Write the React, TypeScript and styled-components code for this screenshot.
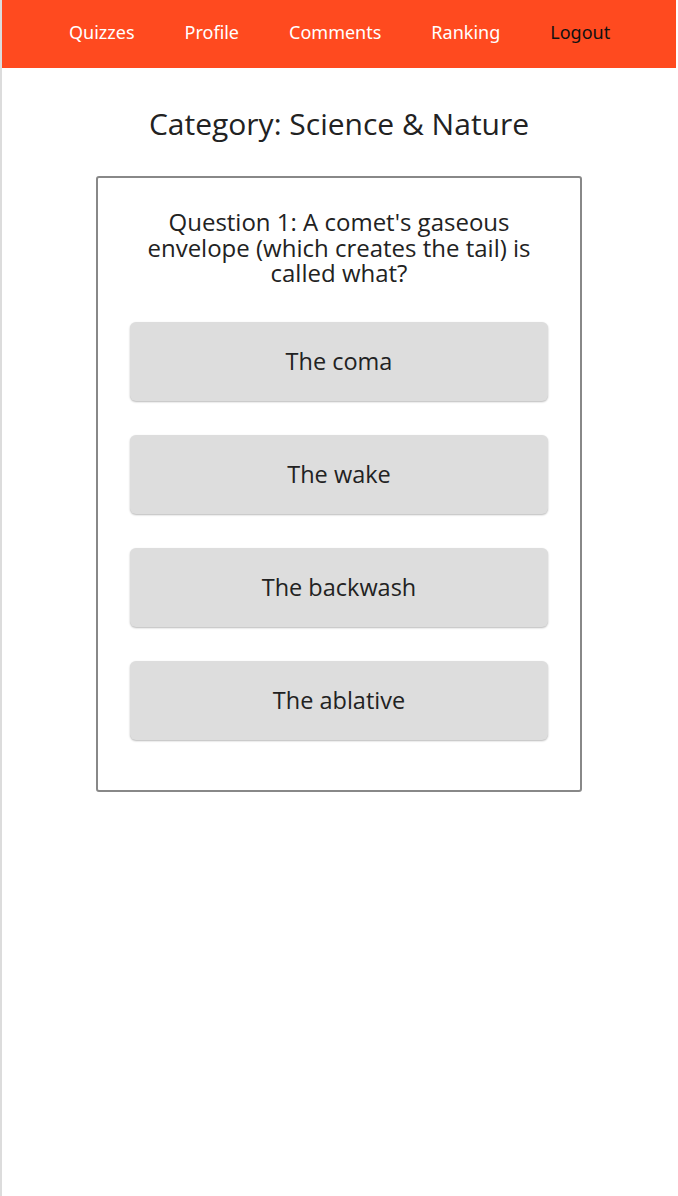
import React from "react";
import styled, { createGlobalStyle } from "styled-components";

const Global = createGlobalStyle`
  html, body { margin: 0; padding: 0; background: #fff; }
  body { font-family: "Open Sans", "Noto Sans", sans-serif; }
  #root { min-height: 1196px; }
`;

const Page = styled.div`
  min-height: 1196px;
  width: 674px;
  border-left: 2px solid #dcdcdc;
  display: flex;
  flex-direction: column;
  align-items: center;
`;

const NavBar = styled.nav`
  width: 100%;
  height: 68px;
  background: #ff4a1f;
  display: flex;
  align-items: center;
  gap: 50px;
  box-sizing: border-box;
  padding: 0 0 4px 67px;
`;

const NavItem = styled.a<{ $dark?: boolean }>`
  font-family: "Noto Sans", "Open Sans", sans-serif;
  font-size: 18px;
  color: ${(p) => (p.$dark ? "#111" : "#fff")};
  text-decoration: none;
  cursor: pointer;
`;

const Title = styled.h1`
  margin: 38px 0 0;
  font-size: 30px;
  font-weight: 400;
  color: #222;
  line-height: 36px;
`;

const Card = styled.section`
  margin-top: 34px;
  width: 486px;
  box-sizing: border-box;
  border: 2px solid #888;
  border-radius: 3px;
  padding: 31px 33px 50px;
  display: flex;
  flex-direction: column;
  align-items: center;
`;

const Question = styled.h2`
  margin: 0;
  font-size: 24px;
  font-weight: 400;
  line-height: 25.5px;
  color: #222;
  text-align: center;
  padding: 0 8px;
`;

const Answers = styled.div`
  margin-top: 36px;
  display: flex;
  flex-direction: column;
  gap: 34px;
  width: 418px;
`;

const Answer = styled.button`
  height: 79px;
  width: 100%;
  background: #dddddd;
  border: none;
  border-radius: 6px;
  box-shadow: 0 1px 2px rgba(0, 0, 0, 0.28);
  font-family: "Open Sans", "Noto Sans", sans-serif;
  font-size: 23.5px;
  color: #222;
  cursor: pointer;
`;

const navItems = [
  { label: "Quizzes" },
  { label: "Profile" },
  { label: "Comments" },
  { label: "Ranking" },
  { label: "Logout", dark: true },
];

const answers = ["The coma", "The wake", "The backwash", "The ablative"];

export default function App() {
  return (
    <>
      <Global />
      <Page>
        <NavBar>
          {navItems.map((n) => (
            <NavItem key={n.label} $dark={n.dark}>
              {n.label}
            </NavItem>
          ))}
        </NavBar>
        <Title>Category: Science &amp; Nature</Title>
        <Card>
          <Question>
            Question 1: A comet's gaseous envelope (which creates the tail) is called what?
          </Question>
          <Answers>
            {answers.map((a) => (
              <Answer key={a}>{a}</Answer>
            ))}
          </Answers>
        </Card>
      </Page>
    </>
  );
}
